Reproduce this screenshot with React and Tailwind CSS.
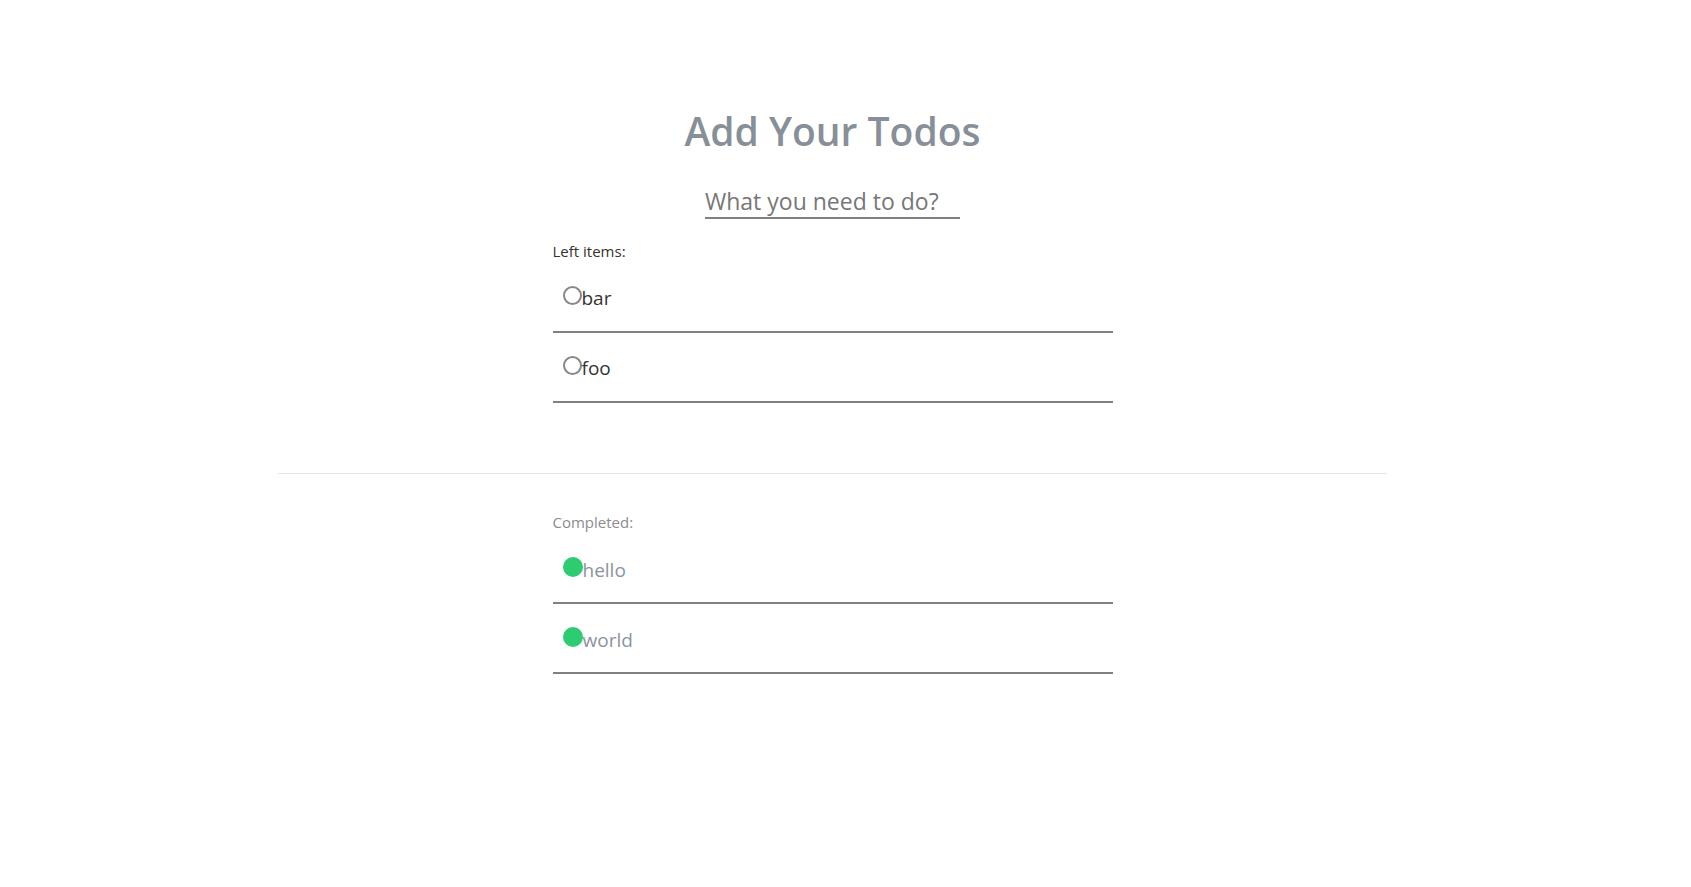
import React from "react";

const leftItems = ["bar", "foo"];
const doneItems = ["hello", "world"];

// Fila de una tarea
const TodoRow = ({ text, done }) => (
  <li className="h-[70px] border-b-2 border-[#808080] pl-[10px] pt-[23px] flex items-baseline">
    {done ? (
      <span className="inline-block w-[20px] h-[20px] rounded-full bg-[#2ecc71] shrink-0" />
    ) : (
      <span className="inline-block w-[19px] h-[19px] rounded-full border-2 border-[#888888] shrink-0" />
    )}
    <span
      className={`text-[19px] leading-[20px] ${
        done ? "text-[#8a94a0]" : "text-[#333333]"
      }`}
    >
      {text}
    </span>
  </li>
);

export default function App() {
  return (
    <div
      className="w-[1665px] min-h-[887px] bg-white pt-[107px]"
      style={{ fontFamily: '"Open Sans", "Noto Sans", sans-serif' }}
    >
      {/* Encabezado */}
      <h1 className="text-center text-[39px] leading-[48px] font-semibold text-[#878f98]">
        Add Your Todos
      </h1>

      <div className="flex justify-center mt-[29px]">
        <input
          type="text"
          placeholder="What you need to do?"
          className="w-[255px] h-[35px] border-b-2 border-[#808080] text-[23px] leading-[30px] text-[#777777] placeholder:text-[#777777] outline-none px-0"
        />
      </div>

      {/* Pendientes */}
      <div className="w-[560px] mx-auto mt-[22px]">
        <p className="text-[15px] leading-[20px] text-[#333333] mb-[2px]">Left items:</p>
        <ul>
          {leftItems.map((t) => (
            <TodoRow key={t} text={t} />
          ))}
        </ul>
      </div>

      <hr className="w-2/3 mx-auto mt-[70px] border-t border-[#e6e6e6]" />

      {/* Completadas */}
      <div className="w-[560px] mx-auto mt-[38px]">
        <p className="text-[15px] leading-[20px] text-[#8c8c8c] mb-[2px]">Completed:</p>
        <ul>
          {doneItems.map((t) => (
            <TodoRow key={t} text={t} done />
          ))}
        </ul>
      </div>
    </div>
  );
}
